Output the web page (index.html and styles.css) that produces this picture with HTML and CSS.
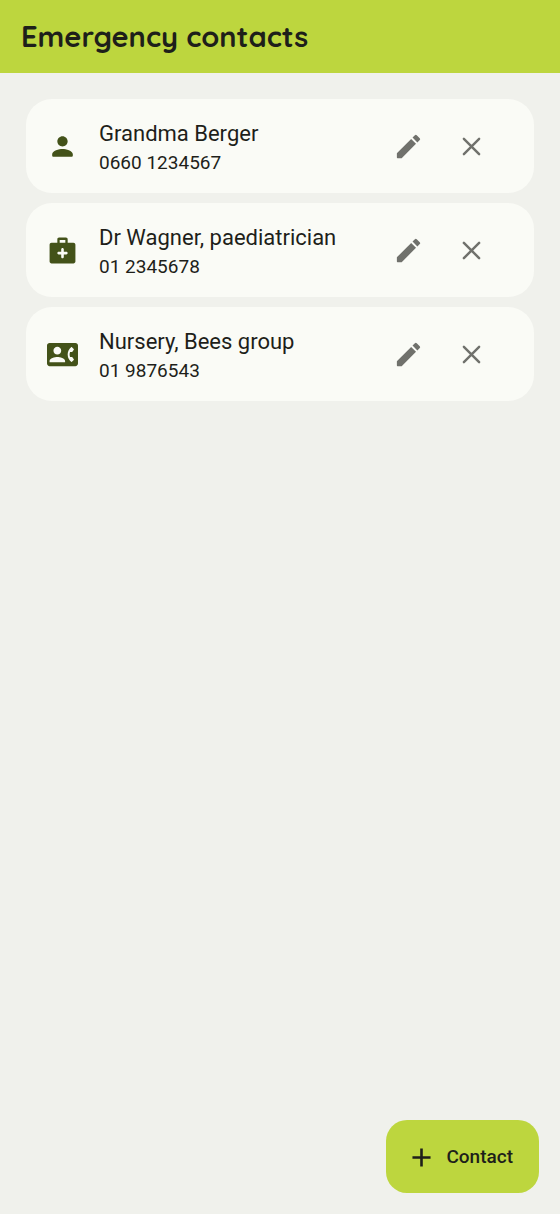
FILE: index.html
```html
<!DOCTYPE html>
<html lang="en">
<head>
<meta charset="utf-8">
<meta name="viewport" content="width=device-width, initial-scale=1">
<title>Emergency contacts</title>
<link rel="stylesheet" href="styles.css">
</head>
<body>
<svg class="sprite" aria-hidden="true">
  <symbol id="edit" viewBox="0 0 24 24"><path d="M3 17.460V20.500c0 .28.22.5.5.5h3.040c.13 0 .26-.05.35-.15L17.810 9.940l-3.750-3.750L3.150 17.100c-.1.1-.15.22-.15.360zM20.710 7.040a1 1 0 0 0 0-1.410l-2.340-2.340a1 1 0 0 0-1.410 0l-1.830 1.830 3.750 3.750z"/></symbol>
  <symbol id="close" viewBox="0 0 24 24"><path d="M6.100 6.100l11.800 11.800M17.900 6.100L6.100 17.900" fill="none" stroke="currentColor" stroke-width="1.900" stroke-linecap="round"/></symbol>
</svg>
<header class="app-bar"><h1 class="app-title">Emergency contacts</h1></header>
<main>
  <ul class="contacts">
    <li class="card">
      <svg class="icon" viewBox="0 0 24 24" aria-hidden="true"><path d="M12 12c2.210 0 4-1.790 4-4s-1.790-4-4-4-4 1.790-4 4 1.790 4 4 4zm0 2c-2.670 0-8 1.340-8 4v1c0 .55.45 1 1 1h14c.55 0 1-.45 1-1v-1c0-2.660-5.330-4-8-4z"/></svg>
      <div class="details"><span class="name">Grandma Berger</span><span class="phone">0660 1234567</span></div>
      <div class="actions">
        <button class="action" type="button" aria-label="Edit Grandma Berger"><svg class="icon"><use href="#edit"/></svg></button>
        <button class="action" type="button" aria-label="Remove Grandma Berger"><svg class="icon"><use href="#close"/></svg></button>
      </div>
    </li>
    <li class="card">
      <svg class="icon" viewBox="0 0 24 24" aria-hidden="true"><path fill-rule="evenodd" d="M20.500 6H16V3.300c0-.7-.6-1.300-1.300-1.300H9.300C8.600 2 8 2.600 8 3.300V6H3.500C2.700 6 2 6.700 2 7.500v13c0 .8.700 1.500 1.500 1.500h17c.8 0 1.500-.7 1.500-1.500v-13c0-.8-.7-1.500-1.500-1.500zM9.800 3.800h4.400V6H9.800V3.800zM15 15h-2v2c0 .55-.45 1-1 1s-1-.45-1-1v-2H9c-.55 0-1-.45-1-1s.45-1 1-1h2v-2c0-.55.45-1 1-1s1 .45 1 1v2h2c.55 0 1 .45 1 1s-.45 1-1 1z"/></svg>
      <div class="details"><span class="name">Dr Wagner, paediatrician</span><span class="phone">01 2345678</span></div>
      <div class="actions">
        <button class="action" type="button" aria-label="Edit Dr Wagner"><svg class="icon"><use href="#edit"/></svg></button>
        <button class="action" type="button" aria-label="Remove Dr Wagner"><svg class="icon"><use href="#close"/></svg></button>
      </div>
    </li>
    <li class="card">
      <svg class="icon" viewBox="0 0 24 24" aria-hidden="true"><path fill-rule="evenodd" d="M22 3H2C.9 3 0 3.900 0 5v14c0 1.100.9 2 2 2h20c1.100 0 1.990-.9 1.990-2L24 5c0-1.100-.9-2-2-2zM8 6c1.660 0 3 1.340 3 3s-1.340 3-3 3-3-1.340-3-3 1.340-3 3-3zm6 12H2v-1c0-2 4-3.100 6-3.100s6 1.100 6 3.100v1zm3.850-4h1.390c.16 0 .3.070.4.200l1.100 1.450c.15.2.13.48-.05.650l-1.360 1.360c-.18.18-.48.2-.67.040A7.900 7.900 0 0 1 16 12c0-2.210.97-4.330 2.660-5.700.2-.16.48-.14.660.040l1.370 1.360c.18.180.2.450.05.650l-1.100 1.450a.5.5 0 0 1-.4.200h-1.390c-.22.63-.35 1.300-.35 2s.13 1.370.35 2z"/></svg>
      <div class="details"><span class="name">Nursery, Bees group</span><span class="phone">01 9876543</span></div>
      <div class="actions">
        <button class="action" type="button" aria-label="Edit Nursery"><svg class="icon"><use href="#edit"/></svg></button>
        <button class="action" type="button" aria-label="Remove Nursery"><svg class="icon"><use href="#close"/></svg></button>
      </div>
    </li>
  </ul>
</main>
<button class="fab" type="button"><svg class="icon" viewBox="0 0 24 24" aria-hidden="true"><path d="M19 13h-6v6h-2v-6H5v-2h6V5h2v6h6z"/></svg>Contact</button>
</body>
</html>
```
FILE: styles.css
```css
* { box-sizing: border-box; }
body {
  margin: 0;
  min-height: 100vh;
  background: #f0f1ec;
  color: #1e1f1a;
  font-family: Roboto, "Liberation Sans", sans-serif;
}
.sprite { display: none; }
.icon {
  display: block;
  flex: none;
  width: 31px;
  height: 31px;
  fill: currentColor;
}
.app-bar {
  padding: 18px 21px 19px;
  background: #bdd63e;
}
.app-title {
  margin: 0;
  font: 700 29px/36px Quicksand, Inter, sans-serif;
}
.contacts {
  display: flex;
  flex-direction: column;
  gap: 10px;
  margin: 0;
  padding: 26px;
  list-style: none;
}
.card {
  display: flex;
  align-items: center;
  gap: 21px;
  padding: 16px 31px 15px 21px;
  border-radius: 26px;
  background: #fafbf6;
  color: #435219;
}
.details {
  flex: 1;
  min-width: 0;
  padding-bottom: 2px;
  color: #1e1f1a;
}
.name, .phone { display: block; }
.name { font-size: 22px; line-height: 34px; }
.phone { font-size: 19px; line-height: 24px; }
.actions { display: flex; color: #70716c; }
.action {
  display: flex;
  align-items: center;
  justify-content: center;
  width: 63px;
  height: 63px;
  padding: 0;
  border: 0;
  border-radius: 50%;
  background: none;
  color: inherit;
}
.fab {
  position: fixed;
  right: 21px;
  bottom: 21px;
  display: flex;
  align-items: center;
  gap: 9px;
  padding: 21px 26px 20px 20px;
  border: 0;
  border-radius: 21px;
  background: #bdd63e;
  color: #1e1f1a;
  font: 500 19px/32px Roboto, "Liberation Sans", sans-serif;
}
```
